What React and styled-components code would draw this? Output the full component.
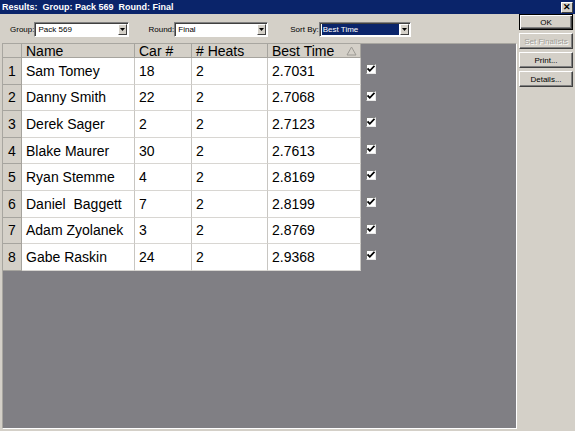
import React from 'react';
import styled, { createGlobalStyle } from 'styled-components';

const GlobalStyle = createGlobalStyle`
  body {
    margin: 0;
    background: #d4d0c8;
    font-family: "Liberation Sans", Arial, sans-serif;
  }
`;

const results = [
  { name: 'Sam Tomey', car: '18', heats: '2', time: '2.7031' },
  { name: 'Danny Smith', car: '22', heats: '2', time: '2.7068' },
  { name: 'Derek Sager', car: '2', heats: '2', time: '2.7123' },
  { name: 'Blake Maurer', car: '30', heats: '2', time: '2.7613' },
  { name: 'Ryan Stemme', car: '4', heats: '2', time: '2.8169' },
  { name: 'Daniel\u00a0 Baggett', car: '7', heats: '2', time: '2.8199' },
  { name: 'Adam Zyolanek', car: '3', heats: '2', time: '2.8769' },
  { name: 'Gabe Raskin', car: '24', heats: '2', time: '2.9368' },
];

const Window = styled.div`
  width: 575px;
  height: 431px;
  display: flex;
  flex-direction: column;
  background: #d4d0c8;
  overflow: hidden;
`;

const TitleBar = styled.div`
  height: 14px;
  flex: none;
  display: flex;
  align-items: center;
  justify-content: space-between;
  padding: 0 2px 0 2px;
  background: #0a246a;
  color: #fff;
  font-size: 9px;
  font-weight: bold;
  white-space: pre;
`;

const CloseButton = styled.div`
  width: 10px;
  height: 9px;
  display: flex;
  align-items: center;
  justify-content: center;
  background: #d4d0c8;
  border: 1px solid;
  border-color: #fff #404040 #404040 #fff;
  color: #000;
  font-size: 9px;
  line-height: 9px;
`;

const Body = styled.div`
  flex: 1;
  display: flex;
  min-height: 0;
`;

const Main = styled.div`
  flex: 1;
  display: flex;
  flex-direction: column;
  padding-left: 2px;
`;

const Toolbar = styled.div`
  height: 28px;
  display: flex;
  align-items: center;
  padding: 1px 0 0 8px;
  gap: 19px;
`;

const Field = styled.div`
  display: flex;
  align-items: center;
  gap: 0;
  margin-left: ${({ $offset }) => $offset || 0}px;
`;

const Label = styled.span`
  font-size: 8px;
  color: #000;
`;

const Combo = styled.div`
  width: ${({ $width }) => $width}px;
  height: 15px;
  box-sizing: border-box;
  display: flex;
  align-items: center;
  background: #fff;
  border: 1px solid;
  border-color: #808080 #fff #fff #808080;
  box-shadow: inset 1px 1px 0 #404040;
  padding: 1px 1px 1px 2px;
`;

const ComboText = styled.span`
  flex: 1;
  height: 11px;
  line-height: 11px;
  font-size: 8px;
  padding-left: 1px;
  background: ${({ $selected }) => ($selected ? '#0a246a' : 'transparent')};
  color: ${({ $selected }) => ($selected ? '#fff' : '#000')};
  margin-right: 1px;
`;

const DropButton = styled.div`
  width: 9px;
  height: 11px;
  box-sizing: border-box;
  display: flex;
  align-items: center;
  justify-content: center;
  background: #d4d0c8;
  border: 1px solid;
  border-color: #fff #404040 #404040 #fff;
`;

const GridArea = styled.div`
  width: 515px;
  flex: 1;
  margin-bottom: 2px;
  box-sizing: border-box;
  background: #807f84;
  border: 1px solid;
  border-color: #a8a6a0 #fff #fff #a8a6a0;
`;

const Table = styled.div`
  display: grid;
  grid-template-columns: 19px 113px 57px 76px 93px 40px;
  grid-template-rows: 14px repeat(8, 26.6px);
`;

const HeadCell = styled.div`
  box-sizing: border-box;
  background: #d4d0c8;
  border-right: 1px solid #a6a49e;
  border-bottom: 1px solid #a6a49e;
  font-size: 14px;
  line-height: 14px;
  padding-left: 4px;
  display: flex;
  align-items: center;
  justify-content: space-between;
  color: #000;
`;

const RowHead = styled.div`
  box-sizing: border-box;
  background: #d4d0c8;
  border-right: 1px solid #a6a49e;
  border-bottom: 1px solid #a6a49e;
  font-size: 14px;
  display: flex;
  align-items: center;
  justify-content: center;
`;

const Cell = styled.div`
  box-sizing: border-box;
  background: #fff;
  border-right: 1px solid #c8c6c2;
  border-bottom: 1px solid #d8d6d2;
  font-size: 14px;
  display: flex;
  align-items: center;
  padding-left: 4px;
  white-space: pre;
  color: #000;
`;

const CheckCell = styled.div`
  padding: 6px 0 0 5px;
`;

const Check = styled.div`
  width: 10px;
  height: 10px;
  box-sizing: border-box;
  background: #fff;
  border: 1px solid;
  border-color: #808080 #e8e8e8 #e8e8e8 #808080;
  display: flex;
  align-items: center;
  justify-content: center;
`;

const Side = styled.div`
  width: 56px;
  display: flex;
  flex-direction: column;
  gap: 3px;
  padding: 0 0 0 1px;
`;

const Button = styled.div`
  width: 54px;
  height: 16px;
  box-sizing: border-box;
  display: flex;
  align-items: center;
  justify-content: center;
  font-size: 8px;
  background: #d4d0c8;
  border: 1px solid;
  border-color: ${({ $default }) => ($default ? '#000' : '#fff #404040 #404040 #fff')};
  box-shadow: ${({ $default }) =>
    $default
      ? 'inset 1px 1px 0 #fff, inset -1px -1px 0 #404040, inset -2px -2px 0 #808080'
      : 'inset -1px -1px 0 #808080'};
  color: ${({ $disabled }) => ($disabled ? '#a09e98' : '#000')};
  text-shadow: ${({ $disabled }) => ($disabled ? '1px 1px 0 #fff' : 'none')};
`;

const Arrow = () => (
  <svg width="5" height="3" viewBox="0 0 5 3">
    <path d="M0 0h5L2.5 3z" fill="#000" />
  </svg>
);

const SortMark = () => (
  <svg width="11" height="10" viewBox="0 0 11 10" style={{ marginRight: 3 }}>
    <path d="M5.5 1L10 9H1z" fill="none" stroke="#9c9a94" strokeWidth="1" />
  </svg>
);

const Tick = () => (
  <svg width="8" height="8" viewBox="0 0 8 8">
    <path d="M0.5 3.5l2.3 2.3L7.5 0.8" fill="none" stroke="#000" strokeWidth="1.8" />
  </svg>
);

const ComboBox = ({ width, value, selected }) => (
  <Combo $width={width}>
    <ComboText $selected={selected}>{value}</ComboText>
    <DropButton>
      <Arrow />
    </DropButton>
  </Combo>
);

const App = () => (
  <>
    <GlobalStyle />
    <Window>
      <TitleBar>
        <span>Results:  Group: Pack 569  Round: Final</span>
        <CloseButton>✕</CloseButton>
      </TitleBar>
      <Body>
        <Main>
          <Toolbar>
            <Field>
              <Label>Group:</Label>
              <ComboBox width={95} value="Pack 569" />
            </Field>
            <Field>
              <Label>Round:</Label>
              <ComboBox width={94} value="Final" />
            </Field>
            <Field $offset={3}>
              <Label>Sort By:</Label>
              <ComboBox width={92} value="Best Time" selected />
            </Field>
          </Toolbar>
          <GridArea>
            <Table>
              <HeadCell />
              <HeadCell>Name</HeadCell>
              <HeadCell>Car #</HeadCell>
              <HeadCell># Heats</HeadCell>
              <HeadCell>
                Best Time
                <SortMark />
              </HeadCell>
              <div />
              {results.map((r, i) => (
                <React.Fragment key={r.name}>
                  <RowHead>{i + 1}</RowHead>
                  <Cell>{r.name}</Cell>
                  <Cell>{r.car}</Cell>
                  <Cell>{r.heats}</Cell>
                  <Cell>{r.time}</Cell>
                  <CheckCell>
                    <Check>
                      <Tick />
                    </Check>
                  </CheckCell>
                </React.Fragment>
              ))}
            </Table>
          </GridArea>
        </Main>
        <Side>
          <Button $default>OK</Button>
          <Button $disabled>Set Finalists</Button>
          <Button>Print...</Button>
          <Button>Details...</Button>
        </Side>
      </Body>
    </Window>
  </>
);

export default App;
